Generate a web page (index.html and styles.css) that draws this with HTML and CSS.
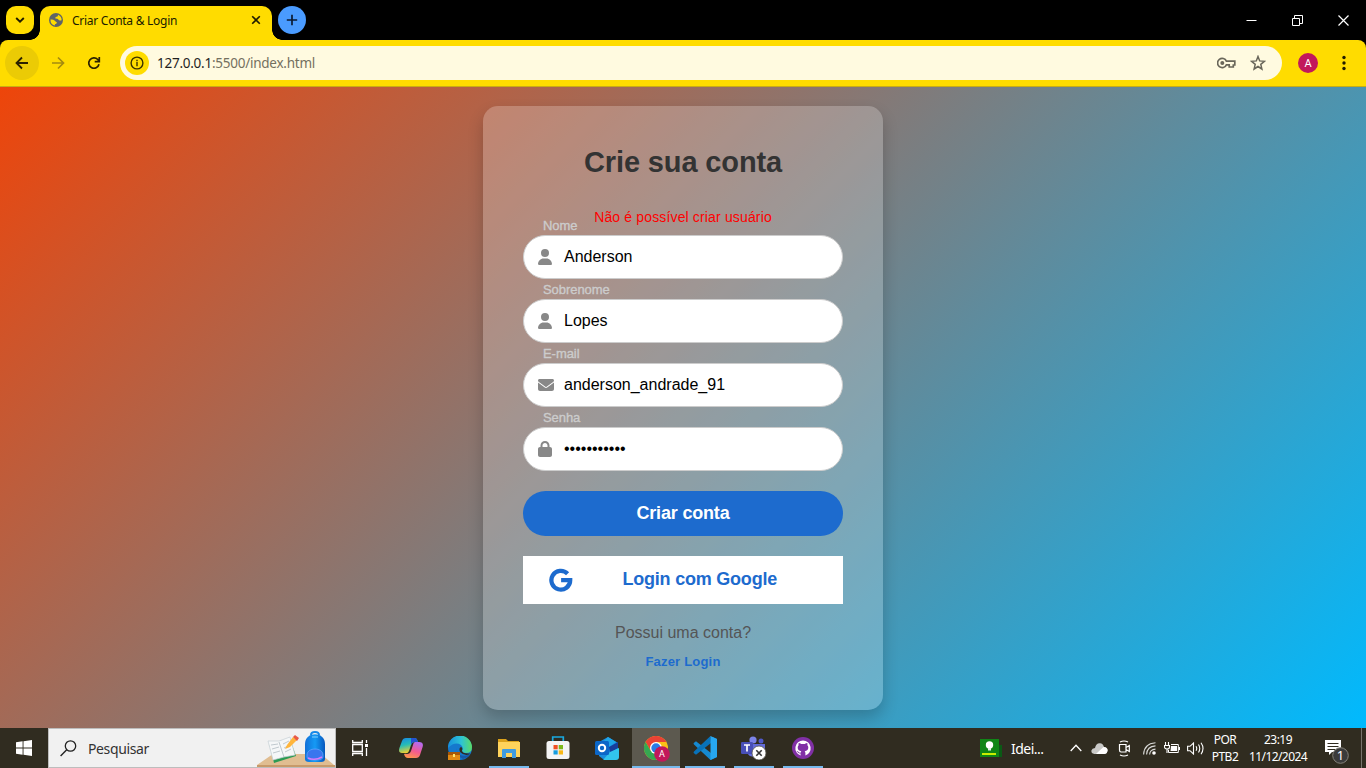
FILE: index.html
```html
<!DOCTYPE html>
<html lang="pt-BR">
<head>
<meta charset="utf-8">
<title>Criar Conta &amp; Login</title>
<link rel="stylesheet" href="styles.css">
</head>
<body>
<div class="screen">
  <header class="tabstrip">
    <button class="tab-search"><svg width="10" height="6" viewBox="0 0 10 6"><path d="M1.2 1 5 4.6 8.800 1" fill="none" stroke="#201c00" stroke-width="1.9"/></svg></button>
    <div class="tab">
      <svg width="14" height="14" viewBox="0 0 14 14"><circle cx="7" cy="7" r="7" fill="#5f6368"/><path d="M1.500 6.500Q4 6 5.500 7.500T8 9.500Q7.500 11 6 11.300L5.800 12.600Q1.300 11.500 1.500 6.500ZM9 1.700Q9.300 3.500 7.600 3.800 6 4 6.300 5.400 8.600 5.200 9.600 6.800 10 8 12.600 7.300 12.800 3.200 9 1.700Z" fill="#ffdc00"/></svg>
      <span class="tab-title">Criar Conta &amp; Login</span>
      <svg class="tab-close" width="10" height="10" viewBox="0 0 10 10"><path d="M1.200 1.200 8.800 8.800M8.800 1.200 1.200 8.800" stroke="#201c00" stroke-width="1.6"/></svg>
    </div>
    <button class="new-tab"><svg width="12" height="12" viewBox="0 0 12 12"><path d="M6 .8V11.200M.8 6H11.200" stroke="#0b1a33" stroke-width="1.700"/></svg></button>
    <div class="window-controls">
      <svg width="11" height="11" viewBox="0 0 11 11"><path d="M.5 5.500H10.500" stroke="#fff"/></svg>
      <svg width="11" height="11" viewBox="0 0 11 11"><path d="M.5 3.500H7.500V10.500H.5ZM2.500 3V.5H10.500V8.500H8" fill="none" stroke="#fff"/></svg>
      <svg width="11" height="11" viewBox="0 0 11 11"><path d="M.5.5 10.500 10.500M10.500.5.5 10.500" stroke="#fff" stroke-width="1.200"/></svg>
    </div>
  </header>

  <nav class="toolbar">
    <button class="nav-button back"><svg width="14" height="14" viewBox="0 0 14 14"><path d="M13 7H2M7 1.500 1.500 7 7 12.500" fill="none" stroke="#2b2100" stroke-width="1.800"/></svg></button>
    <button class="nav-button"><svg width="14" height="14" viewBox="0 0 14 14"><path d="M1 7H12M7 1.500 12.500 7 7 12.500" fill="none" stroke="#a48a10" stroke-width="1.700"/></svg></button>
    <button class="nav-button"><svg width="14" height="14" viewBox="0 0 14 14"><path d="M12 8.300A5.200 5.200 0 1 1 10.800 3.500L12 5M12.300 1V5.600H7.700" fill="none" stroke="#2b2100" stroke-width="1.700"/></svg></button>
    <div class="address">
      <span class="site-info"><svg width="14" height="14" viewBox="0 0 14 14"><circle cx="7" cy="7" r="5.900" fill="none" stroke="#3b3200" stroke-width="1.400"/><path d="M7 6V10.200M7 3.700V5.200" stroke="#3b3200" stroke-width="1.400"/></svg></span>
      <span class="url"><span class="url-host">127.0.0.1</span><span class="url-path">:5500/index.html</span></span>
      <svg class="key" width="19" height="12" viewBox="0 0 19 12"><path d="M9.400 4.200A4.600 4.600 0 1 0 9.400 7.800H12.200V10H16.300V8H17.800V4.200Z" fill="none" stroke="#69665a" stroke-width="1.700"/><circle cx="5.300" cy="6" r="2" fill="#69665a"/></svg>
      <svg class="star" width="16" height="16" viewBox="0 0 16 16"><path d="M8 1.500 9.700 5.900 14.400 6.300 10.800 9.300 11.900 14 8 11.500 4.100 14 5.200 9.300 1.600 6.300 6.300 5.900Z" fill="none" stroke="#69665a" stroke-width="1.500"/></svg>
    </div>
    <span class="profile">A</span>
    <svg class="menu" width="4" height="16" viewBox="0 0 4 16"><g fill="#201c00"><circle cx="2" cy="2.500" r="1.700"/><circle cx="2" cy="8" r="1.700"/><circle cx="2" cy="13.500" r="1.700"/></g></svg>
  </nav>

  <main class="page">
    <form class="card">
      <h1 class="card-title">Crie sua conta</h1>
      <p class="error">Não é possível criar usuário</p>
      <label class="field"><span class="field-label">Nome</span>
        <span class="field-box"><svg width="14" height="16" viewBox="0 0 448 512"><path fill="#888" d="M224 256A128 128 0 1 0 224 0a128 128 0 1 0 0 256zm-45.700 48C79.800 304 0 383.800 0 482.300 0 498.700 13.300 512 29.700 512H418.300c16.400 0 29.700-13.300 29.700-29.700 0-98.500-79.800-178.300-178.300-178.300z"/></svg><span class="value">Anderson</span></span></label>
      <label class="field"><span class="field-label">Sobrenome</span>
        <span class="field-box"><svg width="14" height="16" viewBox="0 0 448 512"><path fill="#888" d="M224 256A128 128 0 1 0 224 0a128 128 0 1 0 0 256zm-45.700 48C79.800 304 0 383.800 0 482.300 0 498.700 13.300 512 29.700 512H418.300c16.400 0 29.700-13.300 29.700-29.700 0-98.500-79.800-178.300-178.300-178.300z"/></svg><span class="value">Lopes</span></span></label>
      <label class="field"><span class="field-label">E-mail</span>
        <span class="field-box"><svg width="16" height="16" viewBox="0 0 512 512"><path fill="#888" d="M48 64C21.500 64 0 85.500 0 112c0 15.100 7.100 29.300 19.200 38.400L236.800 313.600c11.400 8.500 27 8.500 38.400 0L492.800 150.400c12.100-9.100 19.200-23.300 19.200-38.400 0-26.500-21.500-48-48-48zM0 176V384c0 35.300 28.700 64 64 64H448c35.300 0 64-28.700 64-64V176L294.400 339.200c-22.800 17.100-54 17.100-76.800 0z"/></svg><span class="value">anderson_andrade_91</span></span></label>
      <label class="field"><span class="field-label">Senha</span>
        <span class="field-box"><svg width="14" height="16" viewBox="0 0 448 512"><path fill="#888" d="M144 144v48H304V144c0-44.200-35.800-80-80-80s-80 35.800-80 80zM80 192V144C80 64.500 144.500 0 224 0s144 64.500 144 144v48h16c35.300 0 64 28.700 64 64V448c0 35.300-28.700 64-64 64H64c-35.300 0-64-28.700-64-64V256c0-35.300 28.700-64 64-64z"/></svg><span class="value dots">•••••••••••</span></span></label>
      <button class="create" type="button">Criar conta</button>
      <button class="google" type="button"><svg width="24" height="24" viewBox="0 0 24 24"><path d="M18.600 5.700A9.400 9.400 0 1 0 21.200 12.200H12.100" fill="none" stroke="#1d6bce" stroke-width="4.300"/></svg><span class="google-text">Login com Google</span></button>
      <p class="question">Possui uma conta?</p>
      <a class="login">Fazer Login</a>
    </form>
  </main>

  <footer class="taskbar">
    <div class="start"><svg width="16" height="16" viewBox="0 0 16 16"><path fill="#fff" d="M0 2.300 6.600 1.300V7.500H0ZM7.500 1.200 16 0V7.500H7.500ZM0 8.400H6.600V14.700L0 13.700ZM7.500 8.400H16V16L7.500 14.800Z"/></svg></div>
    <div class="search">
      <svg width="17" height="17" viewBox="0 0 17 17"><circle cx="10.500" cy="6" r="5.200" fill="none" stroke="#222" stroke-width="1.300"/><path d="M6.700 9.800.6 16" stroke="#222" stroke-width="1.400"/></svg>
      <span class="search-text">Pesquisar</span>
      <svg class="search-art" width="79" height="38" viewBox="0 0 79 38">
        <defs><linearGradient id="pack" x2="1"><stop stop-color="#1270d8"/><stop offset=".5" stop-color="#159af5"/><stop offset="1" stop-color="#0757bd"/></linearGradient></defs>
        <path d="M17 25H65L78 36V38H1V36Z" fill="#e0bd91"/><path d="M1 36H79V38H1Z" fill="#c79a69"/>
        <path d="M13 14 34 10 40 27 18 34Z" fill="#2b9b54"/><path d="M12 12 23 12 34 8 39 26 28 28 17 31Z" fill="#f5f7f8" stroke="#c7d0d5" stroke-width=".7"/><path d="M23 13 28 28M15 16 22 15M16 20 23 18M17 24 24 22M27 15 33 12M28 19 34 16M29 23 35 20" stroke="#a9b4bb" stroke-width=".7"/>
        <path d="M31 16 37 8 41 11 34 18 29 20Z" fill="#ffb53b"/><path d="M37 8 39 6 43 9 41 12Z" fill="#e85945"/>
        <path d="M55 6C55 2 63 2 63 6" fill="none" stroke="#1689e8" stroke-width="2"/><path d="M49 15C49 2 69 2 69 15V30Q69 33 65 33H53Q49 33 49 30Z" fill="url(#pack)"/><path d="M51 26C51 18 67 18 67 26V28Q67 31 59 31T51 28Z" fill="#3976ee" stroke="#67aaff" stroke-width=".7"/><path d="M52 29Q59 32 66 28" fill="none" stroke="#d87bfa" stroke-width="1.500"/><path d="M56 8H62" stroke="#7fd2ff"/>
      </svg>
    </div>
    <div class="app"><svg width="17" height="16" viewBox="0 0 17 16"><path d="M.7 0V2.500H10.300V0M.7 4.500H10.300V11.500H.7ZM.7 16V13.500H10.300V16M14.500 0V3M14.500 8V16" fill="none" stroke="#fff" stroke-width="1.300"/><path d="M13 4H16V7H13Z" fill="#fff"/></svg></div>
    <div class="app copilot"><svg width="24" height="22" viewBox="0 0 24 22"><defs><linearGradient id="cpa" x2=".3" y2="1"><stop stop-color="#1687e8"/><stop offset=".5" stop-color="#25bcb6"/><stop offset="1" stop-color="#f3d02d"/></linearGradient><linearGradient id="cpb" x1=".6" x2=".2" y2="1"><stop stop-color="#b66aec"/><stop offset=".5" stop-color="#f15a91"/><stop offset="1" stop-color="#ff9847"/></linearGradient></defs><path d="M7 1H16Q18 1 18.800 5H16Q13 5 12 8L10 14Q9 17 5 16H3Q-1 16 .4 11L3 4Q4 1 7 1Z" fill="url(#cpa)"/><path d="M16 5H20Q25 5 23.600 10L21 18Q20 21 17 21H9Q6 21 5 17H8Q11 17 12 14L14 8Q14.500 5 16 5Z" fill="url(#cpb)"/><path d="M12 1H16Q18 1 19 5H15Q13 5 12 8Z" fill="#2353cf"/></svg></div>
    <div class="app"><svg width="24" height="24" viewBox="0 0 24 24"><defs><linearGradient id="ed" x2="1"><stop stop-color="#168fdd"/><stop offset=".55" stop-color="#2dc3d5"/><stop offset="1" stop-color="#5bdc65"/></linearGradient></defs><circle cx="12" cy="12" r="12" fill="#1578cd"/><path d="M0 12A12 12 0 0 1 24 11Q24 17 18 17 14 17 14 14.500 16 12 13 9 7 5 0 12Z" fill="url(#ed)"/><path d="M9 12Q8 16 12 19 17 21 22 18 20 22 15 23 8 20 9 12Z" fill="#1559a8"/><path d="M14 14.500Q14 18 22 17.500L21 18.500Q16 20 12 16 10.500 12 13 11Q15 12 14 14.500Z" fill="#302c20"/><path d="M0 16H12V24H0Z" fill="#e18a13"/><path d="M0 16H12V19H0Z" fill="#a65708"/><path d="M5 18H7V21H5Z" fill="#ffe36c"/></svg></div>
    <div class="app open"><svg width="22" height="19" viewBox="0 0 22 19"><path d="M0 0H8L10 2H21V6H0Z" fill="#dca21b"/><path d="M0 3H22V18H0Z" fill="#ffd35b"/><path d="M4 18V11Q4 10 5 10H17Q18 10 18 11V19H14V14H8V19H4Z" fill="#3f9be0"/></svg></div>
    <div class="app"><svg width="24" height="24" viewBox="0 0 24 24"><path d="M6.700 6V1H17.300V6" fill="none" stroke="#19a9df" stroke-width="1.700"/><rect x=".5" y="5" width="23" height="18" rx="2.500" fill="#f4f4f4"/><path d="M7.500 9H11.700V13.300H7.500Z" fill="#f05023"/><path d="M12.700 9H17V13.300H12.700Z" fill="#7db91b"/><path d="M7.500 14.300H11.700V18.500H7.500Z" fill="#159cdf"/><path d="M12.700 14.300H17V18.500H12.700Z" fill="#f9b816"/></svg></div>
    <div class="app"><svg width="24" height="23" viewBox="0 0 24 23"><path d="M4 5 13 0 23 6V20Q23 22 21 22H8L4 19Z" fill="#198dde"/><path d="M13 0 21 5 14 10 7 6Z" fill="#1fa5e8"/><path d="M14 10 23 5V11L15 16Z" fill="#173d9b"/><path d="M15 15 24 11V20Q24 23 21 23H8Z" fill="#32c4ec"/><rect y="4" width="14" height="14" rx="1.500" fill="#0c67c8"/><circle cx="7" cy="11" r="3.200" fill="none" stroke="#fff" stroke-width="2"/></svg></div>
    <div class="app open active"><svg class="chrome" width="26" height="26" viewBox="0 0 26 26"><circle cx="12" cy="12" r="12" fill="#fbc116"/><path d="M1.600 6A12 12 0 0 1 22.400 6H12L6.800 15Z" fill="#e94235"/><path d="M1.600 6A12 12 0 0 0 12 24L17.200 15H6.800Z" fill="#36a852"/><circle cx="12" cy="12" r="6" fill="#fff"/><circle cx="12" cy="12" r="4.700" fill="#297be8"/><circle cx="18" cy="18" r="7.800" fill="#c2185b"/><text x="18" y="21.300" text-anchor="middle" class="chrome-badge">A</text></svg></div>
    <div class="app open"><svg width="24" height="24" viewBox="0 0 24 24"><path d="M17.500 0 24 3V21L17.500 24 1 8.500Q0 7.500 1 6.800L3 5.300 18 17V0Z" fill="#168ad1"/><path d="M17.500 0 1 15.500Q0 16.500 1 17.200L3 18.800 18 7Z" fill="#0872b9"/><path d="M17.500 0 24 3V21L17.500 24Z" fill="#27a7ef"/></svg></div>
    <div class="app open"><svg width="26" height="24" viewBox="0 0 26 24"><circle cx="12" cy="4" r="3.600" fill="#7c83e8"/><circle cx="20" cy="5" r="2.500" fill="#5059c9"/><path d="M6 8H24V16Q20 20 18 18 9 24 6 16Z" fill="#626bd8"/><rect y="6" width="12" height="12" rx="1.200" fill="#484fb8"/><path d="M3 9H9M6 9V15.500" stroke="#fff" stroke-width="1.700"/><circle cx="18" cy="17" r="7" fill="#fff" stroke="#55544b" stroke-width=".8"/><path d="M15.300 14.300 20.700 19.700M20.700 14.300 15.300 19.700" stroke="#333" stroke-width="1.600"/></svg></div>
    <div class="app open"><svg width="22" height="22" viewBox="0 0 22 22"><circle cx="11" cy="11" r="11" fill="#8130a6"/><path d="M11 3.500A7.700 7.700 0 0 0 8.600 18.500V16.400Q6.300 16.800 5.500 15L4.600 14Q6 13.900 6.800 15.200 7.500 16 8.700 15.500L9.300 14.300Q5.700 13.800 5.700 10.500 5.700 9 6.600 8.200 6.300 7 6.800 6 8 6 9.200 7H12.800Q14 6 15.200 6 15.700 7 15.400 8.200 16.300 9 16.300 10.500 16.300 13.800 12.700 14.300L13.400 15.800V18.500A7.700 7.700 0 0 0 11 3.500Z" fill="#fff"/></svg></div>

    <div class="news"><svg width="22" height="18" viewBox="0 0 22 18"><path d="M16 6H22V18H12Z" fill="#0a5a15"/><path d="M0 0H19V18H0Z" fill="#108516"/><circle cx="9.500" cy="6" r="3.700" fill="#fff"/><path d="M8 9H11V11.500H8Z" fill="#e5f3e5"/><path d="M2 14H16V16H2Z" fill="#c9ed00"/></svg><span class="news-text">Idei...</span></div>
    <div class="tray">
      <svg class="tray-up" width="12" height="8" viewBox="0 0 12 8"><path d="M.7 7 6 1.300 11.300 7" fill="none" stroke="#fff" stroke-width="1.300"/></svg>
      <svg class="tray-cloud" width="17" height="11" viewBox="0 0 17 11"><path d="M3.500 11Q0 10.500.4 7.500 1 5 4 5 5 0 9 .3 12 .5 13 4 16.500 4.300 16.600 7.500 16 11 13 11Z" fill="#c9c9c7"/><path d="M5 11Q8 8 12.500 4 16.500 4.300 16.600 7.500 16 11 13 11Z" fill="#fff"/></svg>
      <svg class="tray-cam" width="13" height="17" viewBox="0 0 13 17"><path d="M2 2Q6 0 10 2M2 15Q6 17 10 15M1.500 4.500H8V12H3Q1.500 12 1.500 10ZM8 7.500 11.300 5.500V11.500L8 9.500" fill="none" stroke="#fff" stroke-width="1.200"/></svg>
      <svg class="tray-wifi" width="13" height="13" viewBox="0 0 13 13"><g fill="none" stroke="#d9d9d7" stroke-width="1.100"><path d="M.6 12.500Q1 1.500 12.500.7M3.600 12.500Q4 4.300 12.500 3.900M6.600 12.500Q7 7.400 12.500 7.100"/></g><circle cx="11" cy="11" r="1.800" fill="#fff"/></svg>
      <svg class="tray-power" width="16" height="12" viewBox="0 0 16 12"><path d="M1.500 0V3M4.500 0V3M.5 3.500H5.500V5Q5.500 7 3 7T.5 5ZM3 7V11" fill="none" stroke="#fff" stroke-width="1.100"/><path d="M7 2.500H14.300V10.500H4.500V8" fill="none" stroke="#fff"/><path d="M7 4H13V9H6.500ZM14.500 5H16V8H14.500Z" fill="#fff"/></svg>
      <svg class="tray-sound" width="18" height="13" viewBox="0 0 18 13"><path d="M.6 4.300H3L6.500 1V12L3 8.700H.6Z" fill="none" stroke="#fff" stroke-width="1.100"/><path d="M9 4.200Q10.500 6.500 9 8.800M11.500 2.500Q14 6.500 11.500 10.500M14 .8Q18 6.500 14 12.200" fill="none" stroke="#fff" stroke-width="1.100"/></svg>
      <div class="lang"><span>POR</span><span>PTB2</span></div>
      <div class="clock"><span>23:19</span><span class="date">11/12/2024</span></div>
      <div class="notifications"><svg width="24" height="25" viewBox="0 0 24 25"><path d="M0 1H16V13H7L4 16V13H0Z" fill="#fff"/><path d="M2.500 4.500H13.500M2.500 7.500H13.500M2.500 10.500H10" stroke="#302c20"/><circle cx="15.500" cy="16.500" r="7.800" fill="#3b3b3b" stroke="#85827a"/><text x="15.500" y="21" text-anchor="middle" class="badge-number">1</text></svg></div>
    </div>
  </footer>
</div>
</body>
</html>
```
FILE: styles.css
```css
* { box-sizing: border-box; }
body { margin: 0; overflow: hidden; font-family: "Liberation Sans", Arial, sans-serif; }
button { border: 0; padding: 0; font-family: inherit; }
svg { display: block; flex: none; }
p, h1 { margin: 0; }
.screen { width: 1366px; height: 768px; display: flex; flex-direction: column; background: #000; }

.tabstrip { height: 40px; display: flex; padding: 6px 0 0 6px; }
.tab-search { width: 28px; height: 28px; border-radius: 10px; background: #ffdc00; display: grid; place-items: center; }
.tab { position: relative; width: 232px; height: 34px; margin-left: 6px; padding: 0 11px 6px 9px; display: flex; align-items: center; border-radius: 10px 10px 0 0; background: #ffdc00; font-family: "Noto Sans", sans-serif; font-size: 12px; color: #201c00; }
.tab::before, .tab::after { content: ""; position: absolute; bottom: 0; width: 10px; height: 10px; }
.tab::before { left: -10px; background: radial-gradient(circle at 0 0, transparent 9.500px, #ffdc00 10px); }
.tab::after { right: -10px; background: radial-gradient(circle at 100% 0, transparent 9.500px, #ffdc00 10px); }
.tab-title { margin-left: 9px; white-space: nowrap; letter-spacing: -.27px; }
.tab-close { margin-left: auto; }
.new-tab { width: 28px; height: 28px; margin-left: 6px; border-radius: 50%; background: #4a9bff; display: grid; place-items: center; }
.window-controls { margin: 9px 17px 0 auto; display: flex; gap: 35px; }

.toolbar { height: 47px; padding: 0 20px 1px 5px; display: flex; align-items: center; background: #ffdc00; border-bottom: 1px solid #c9ae13; border-radius: 8px 8px 0 0; }
.nav-button { width: 34px; height: 34px; margin-right: 2px; border-radius: 50%; display: grid; place-items: center; background: none; }
.back { background: #ebcb05; }
.address { width: 1162px; height: 34px; margin-left: 7px; padding: 0 16px 0 5px; border-radius: 17px; background: #fffae0; display: flex; align-items: center; }
.site-info { width: 24px; height: 24px; border-radius: 50%; background: #ffdc00; display: grid; place-items: center; }
.url { margin-left: 8px; font: 13.500px "Noto Sans", sans-serif; letter-spacing: -.25px; color: #1f1f1f; }
.url-path { color: #74705f; }
.key { margin-left: auto; }
.star { margin-left: 14px; }
.profile { width: 20px; height: 20px; margin-left: 16px; border-radius: 50%; background: #c2185b; color: #fff; font: 11px/21px Roboto, sans-serif; text-align: center; }
.menu { margin-left: auto; }

.page { height: 641px; padding-top: 19px; background: linear-gradient(135deg, #ee450a, #00bafe); overflow: hidden; }
.card { width: 400px; height: 604px; margin: 0 auto; padding: 40px 40px 0; border-radius: 15px; background: rgba(255, 255, 255, .22); box-shadow: 0 8px 16px rgba(0, 0, 0, .2); display: flex; flex-direction: column; align-items: center; }
.card > * { flex: none; }
.card-title { font-size: 29px; line-height: 32px; letter-spacing: -.13px; color: #333; }
.error { margin-top: 30px; font-size: 14px; line-height: 18px; letter-spacing: .15px; color: #f00; }
.field { width: 320px; height: 64px; display: flex; flex-direction: column; }
.error + .field { margin-top: -11px; }
.field-label { height: 20px; padding: 3px 0 0 20px; font-size: 13px; line-height: 15px; letter-spacing: -.06px; color: #ccc; -webkit-text-stroke: .35px #ccc; }
.field-box { height: 44px; padding: 0 14px; display: flex; align-items: center; border: 1px solid #ccc; border-radius: 22px; background: #fff; font-size: 16px; color: #000; }
.value { width: 264px; margin-left: auto; }
.dots { padding-bottom: 1px; }
.create { width: 320px; height: 45px; margin-top: 20px; padding-bottom: 1px; border-radius: 23px; background: #1d6bce; color: #fff; font-size: 18px; font-weight: bold; letter-spacing: -.18px; }
.google { width: 320px; height: 48px; margin-top: 20px; padding: 0 66px 0 26px; display: flex; align-items: center; justify-content: space-between; background: #fff; color: #1d6bce; font-size: 18px; font-weight: bold; letter-spacing: -.22px; }
.google-text { padding-bottom: 2px; }
.question { margin-top: 19px; font-size: 16px; line-height: 20px; color: #555; }
.login { margin-top: 11px; font-size: 13px; line-height: 15px; font-weight: bold; letter-spacing: .2px; color: #1d6bce; }

.taskbar { height: 40px; display: flex; background: #302c20; color: #fff; font-family: "Noto Sans", sans-serif; }
.start { width: 48px; display: grid; place-items: center; }
.search { width: 288px; padding-left: 11px; display: flex; align-items: center; border: 1px solid #bdbdbd; background: #f1f1f1; }
.search-text { margin-left: 11px; font-size: 14px; letter-spacing: -.38px; color: #333; }
.search-art { margin-left: auto; }
.app { width: 48px; margin-right: 1px; display: grid; place-items: center; position: relative; }
.copilot { margin-left: 2px; }
.open::after { content: ""; position: absolute; left: 4px; bottom: 0; width: 40px; height: 2px; background: #76b9ed; }
.active { background: #5c594f; }
.active::after { left: 0; width: 48px; }
.chrome { margin: 2px 0 0 2px; }
.chrome-badge { font: 9px Roboto, sans-serif; fill: #fff; }
.news { margin-left: 152px; display: flex; align-items: center; }
.news-text { margin-left: 9px; font-size: 14px; letter-spacing: -.5px; }
.tray { margin-left: auto; display: flex; align-items: center; }
.tray-cloud { margin-left: 9px; }
.tray-cam { margin-left: 10px; }
.tray-wifi { margin-left: 12px; }
.tray-power { margin-left: 8px; }
.tray-sound { margin-left: 7px; }
.lang, .clock { display: flex; flex-direction: column; align-items: center; font-size: 12px; line-height: 17px; letter-spacing: -.5px; }
.lang { width: 30px; margin-left: 5px; }
.clock { width: 60px; margin-left: 8px; }
.date { letter-spacing: -.6px; }
.notifications { width: 47px; height: 40px; margin: 0 4px 0 7px; padding: 11px 0 0 10px; border-right: 1px solid #77746c; }
.badge-number { font: 13px "Noto Sans", sans-serif; fill: #fff; }
```
